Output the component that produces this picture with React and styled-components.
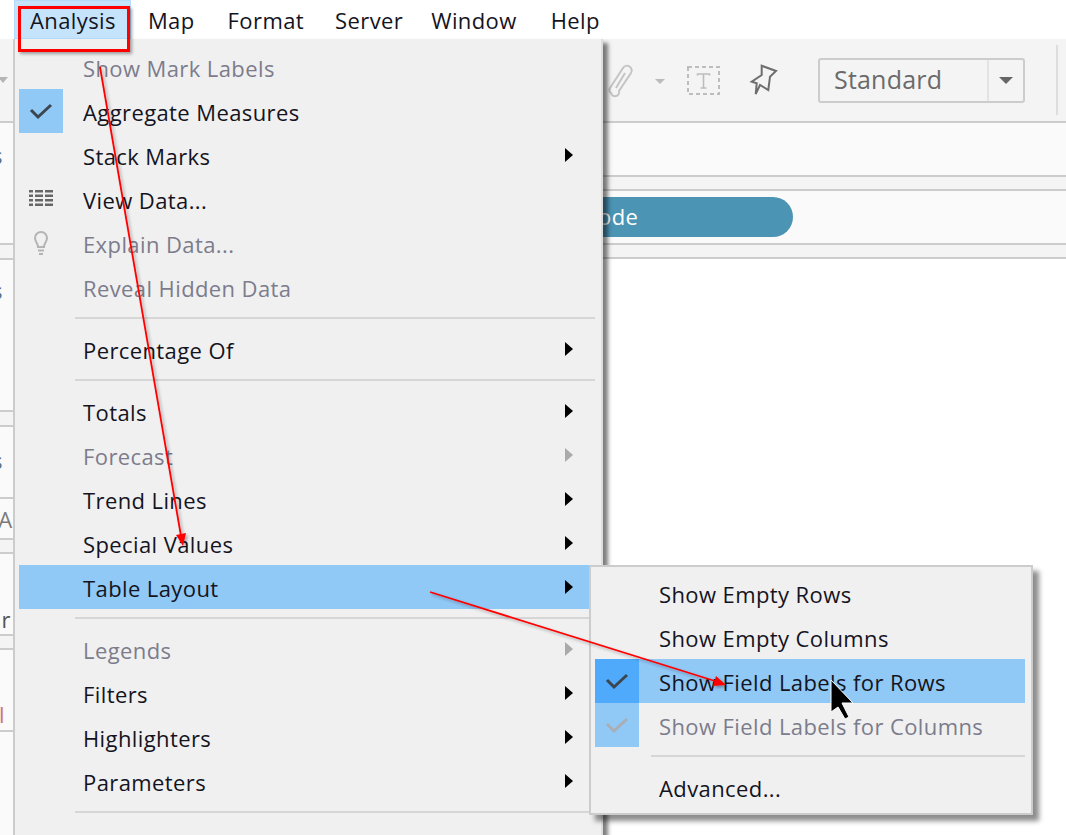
import React from "react";
import styled, { createGlobalStyle } from "styled-components";

const FONT = `"Open Sans", "Noto Sans", sans-serif`;

const GlobalStyle = createGlobalStyle`
  html, body {
    margin: 0;
    padding: 0;
    background: #fff;
    font-family: ${FONT};
  }
`;

const Page = styled.div`
  position: relative;
  width: 1066px;
  height: 835px;
  overflow: hidden;
  background: #fff;
  color: #14141e;
  font-size: 22px;
  letter-spacing: 0.4px;
`;

const MenuBar = styled.div`
  display: flex;
  align-items: center;
  height: 39px;
  padding-left: 14px;
`;

const MenuBarItem = styled.div`
  display: flex;
  align-items: center;
  height: 39px;
  padding: 0 15px 0 ${p => p.$left || 17}px;
  background: ${p => (p.$active ? "#c6e3fc" : "transparent")};
  box-shadow: ${p => (p.$active ? "inset 0 0 0 1px #b5dbfb" : "none")};
`;

const Body = styled.div`
  display: flex;
  height: 796px;
`;

const LeftPane = styled.div`
  width: 13px;
  flex: none;
  border-right: 2px solid #ccc;
  display: flex;
  flex-direction: column;
  overflow: hidden;
`;

const LeftRow = styled.div`
  height: ${p => p.$h}px;
  flex: ${p => (p.$grow ? 1 : "none")};
  background: ${p => (p.$shade ? "#f4f4f4" : "#fafafa")};
  border-bottom: ${p => (p.$grow ? "0" : "2px solid #ccc")};
  position: relative;
  overflow: hidden;
`;

const LeftText = styled.span`
  position: absolute;
  right: ${p => p.$right}px;
  top: ${p => p.$top}px;
  color: ${p => p.$color || "#5f6f86"};
  line-height: 28px;
  white-space: nowrap;
`;

const LeftCaret = styled.div`
  position: absolute;
  left: -2px;
  top: 38px;
  border: 5px solid transparent;
  border-top: 6px solid #b5b5b5;
  border-bottom: 0;
`;

const Main = styled.div`
  flex: 1;
  display: flex;
  flex-direction: column;
  min-width: 0;
`;

const Toolbar = styled.div`
  height: 82px;
  flex: none;
  display: flex;
  align-items: center;
  justify-content: flex-end;
  background: #f4f4f4;
  border-bottom: 2px solid #ccc;
`;

const ToolIcon = styled.svg`
  display: block;
  flex: none;
  margin-right: ${p => p.$gap}px;
  overflow: visible;
`;

const ToolCaret = styled.div`
  width: 0;
  height: 0;
  flex: none;
  margin: 2px ${p => p.$gap}px 0 0;
  border: 5px solid transparent;
  border-top: 5px solid #bbb;
  border-bottom: 0;
`;

const StyleSelect = styled.div`
  width: 207px;
  height: 45px;
  box-sizing: border-box;
  flex: none;
  display: flex;
  margin-right: 31px;
  border: 2px solid #ccc;
  border-radius: 3px;
  color: #6a6a6a;
  font-size: 25px;
  letter-spacing: 0.2px;
`;

const StyleValue = styled.div`
  flex: 1;
  display: flex;
  align-items: center;
  padding: 0 0 3px 14px;
  border-right: 2px solid #e3e3e3;
`;

const StyleArrow = styled.div`
  width: 34px;
  display: flex;
  align-items: center;
  justify-content: center;

  &::after {
    content: "";
    border: 7px solid transparent;
    border-top: 7px solid #666;
    border-bottom: 0;
  }
`;

const ToolDivider = styled.div`
  width: 2px;
  height: 70px;
  flex: none;
  margin-right: 8px;
  background: #ddd;
`;

const Shelf = styled.div`
  height: ${p => p.$h}px;
  flex: none;
  display: flex;
  align-items: center;
  background: ${p => (p.$shade ? "#f4f4f4" : "#fafafa")};
  border-bottom: 2px solid #ccc;
`;

const Pill = styled.div`
  width: 393px;
  height: 40px;
  box-sizing: border-box;
  margin-left: 385px;
  padding: 0 0 2px 198px;
  display: flex;
  align-items: center;
  background: #4b94b4;
  border-radius: 20px;
  color: #fff;
  font-size: 22px;
`;

const Canvas = styled.div`
  flex: 1;
  background: #fff;
`;

const Menu = styled.div`
  position: absolute;
  left: 15px;
  top: 39px;
  width: 588px;
  box-sizing: border-box;
  padding: 6px 6px 40px 4px;
  background: #f0f0f0;
  border-right: 2px solid #dedede;
  box-shadow: 5px 4px 4px rgba(0, 0, 0, 0.5);
`;

const SubMenu = styled.div`
  position: absolute;
  left: 589px;
  top: 565px;
  width: 444px;
  box-sizing: border-box;
  padding: 4px 6px 4px 4px;
  background: #f0f0f0;
  border: 2px solid #ccc;
  box-shadow: 6px 6px 5px rgba(0, 0, 0, 0.45);
`;

const Row = styled.div`
  display: flex;
  align-items: center;
  height: 44px;
  background: ${p => (p.$on ? "#90c8f6" : "transparent")};
  color: ${p => (p.$off ? "#7c7c8c" : "inherit")};
`;

const IconCell = styled.div`
  width: 44px;
  height: 44px;
  flex: none;
  display: flex;
  align-items: center;
  justify-content: center;
  background: ${p => p.$bg || "transparent"};
`;

const Label = styled.div`
  flex: 1;
  margin-left: 20px;
  position: relative;
  top: 1px;
  white-space: nowrap;
`;

const SubArrow = styled.div`
  margin-right: 22px;
  border: 7px solid transparent;
  border-left: 8px solid ${p => (p.$off ? "#aaa" : "#000")};
  border-right: 0;
`;

const Separator = styled.div`
  height: 2px;
  margin: 8px 0 8px 56px;
  background: #d6d6d6;
`;

const Overlay = styled.svg`
  position: absolute;
  left: 0;
  top: 0;
  pointer-events: none;
`;

const RedBox = styled.div`
  position: absolute;
  left: 18px;
  top: 6px;
  width: 112px;
  height: 46px;
  box-sizing: border-box;
  border: 3px solid #f00;
  box-shadow: 2px 2px 3px rgba(0, 0, 0, 0.35);
`;

const Check = ({ color = "#3c4650" }) => (
  <svg width="24" height="18" viewBox="0 0 24 18">
    <polyline points="2,8 9,15 22,3" fill="none" stroke={color} strokeWidth="3" />
  </svg>
);

const GridIcon = () => (
  <svg width="24" height="19" viewBox="0 0 24 19" fill="#666">
    {[0, 4.5, 9, 13.5].map(y => (
      <g key={y}>
        <rect x="0" y={y} width="4" height="2.5" />
        <rect x="6" y={y} width="8" height="2.5" />
        <rect x="16" y={y} width="8" height="2.5" />
      </g>
    ))}
  </svg>
);

const BulbIcon = () => (
  <svg width="16" height="24" viewBox="0 0 16 24" fill="none" stroke="#b4b4b4" strokeWidth="2">
    <path d="M5 16 C5 12 2 11 2 7 A6 6 0 0 1 14 7 C14 11 11 12 11 16 Z" />
    <path d="M5 19.5 H11 M6 23 H10" />
  </svg>
);

const mainRows = [
  { label: "Show Mark Labels", off: true },
  { label: "Aggregate Measures", icon: "check" },
  { label: "Stack Marks", sub: true },
  { label: "View Data...", icon: "grid" },
  { label: "Explain Data...", off: true, icon: "bulb" },
  { label: "Reveal Hidden Data", off: true },
  { sep: true },
  { label: "Percentage Of", sub: true },
  { sep: true },
  { label: "Totals", sub: true },
  { label: "Forecast", sub: true, off: true },
  { label: "Trend Lines", sub: true },
  { label: "Special Values", sub: true },
  { label: "Table Layout", sub: true, on: true },
  { sep: true },
  { label: "Legends", sub: true, off: true },
  { label: "Filters", sub: true },
  { label: "Highlighters", sub: true },
  { label: "Parameters", sub: true },
  { sep: true }
];

const subRows = [
  { label: "Show Empty Rows" },
  { label: "Show Empty Columns" },
  { label: "Show Field Labels for Rows", on: true, icon: "check" },
  { label: "Show Field Labels for Columns", off: true, icon: "check" },
  { sep: true },
  { label: "Advanced..." }
];

const cellColor = row => {
  if (row.icon !== "check") return null;
  if (row.on) return "#4faafb";
  return "#90c8f6";
};

const MenuRows = ({ rows }) =>
  rows.map((row, i) =>
    row.sep ? (
      <Separator key={i} />
    ) : (
      <Row key={i} $on={row.on} $off={row.off}>
        <IconCell $bg={cellColor(row)}>
          {row.icon === "check" && <Check color={row.off ? "#a8aeb4" : "#3c4650"} />}
          {row.icon === "grid" && <GridIcon />}
          {row.icon === "bulb" && <BulbIcon />}
        </IconCell>
        <Label>{row.label}</Label>
        {row.sub && <SubArrow $off={row.off} />}
      </Row>
    )
  );

const App = () => (
  <Page>
    <GlobalStyle />
    <MenuBar>
      <MenuBarItem $active $left={16}>Analysis</MenuBarItem>
      <MenuBarItem>Map</MenuBarItem>
      <MenuBarItem $left={18}>Format</MenuBarItem>
      <MenuBarItem $left={16}>Server</MenuBarItem>
      <MenuBarItem $left={13}>Window</MenuBarItem>
      <MenuBarItem $left={19}>Help</MenuBarItem>
    </MenuBar>

    <Body>
      <LeftPane>
        <LeftRow $h={82} $shade>
          <LeftCaret />
        </LeftRow>
        <LeftRow $h={120}>
          <LeftText $right={10} $top={18}>s</LeftText>
        </LeftRow>
        <LeftRow $h={13} $shade />
        <LeftRow $h={150}>
          <LeftText $right={10} $top={16}>s</LeftText>
        </LeftRow>
        <LeftRow $h={13} $shade />
        <LeftRow $h={70}>
          <LeftText $right={10} $top={19}>s</LeftText>
        </LeftRow>
        <LeftRow $h={39}>
          <LeftText $right={-9} $top={6} $color="#7a7a7a">Ar</LeftText>
        </LeftRow>
        <LeftRow $h={12} $shade />
        <LeftRow $h={80}>
          <LeftText $right={2} $top={51} $color="#555">ur</LeftText>
        </LeftRow>
        <LeftRow $h={12} $shade />
        <LeftRow $h={80}>
          <LeftText $right={8} $top={50} $color="#c77">l</LeftText>
        </LeftRow>
        <LeftRow $grow />
      </LeftPane>

      <Main>
        <Toolbar>
          <ToolIcon $gap={22} width="26" height="32" viewBox="0 0 26 32" fill="none" stroke="#c4c4c4" strokeWidth="2">
            <path d="M3 24 L16 4 A4.5 4.5 0 0 1 24 9 L12 27 A4 4 0 0 1 4 29 A4 4 0 0 1 3 24 M9 24 L18 9" />
          </ToolIcon>
          <ToolCaret $gap={22} />
          <ToolIcon $gap={30} width="33" height="29" viewBox="0 0 33 29" fill="none" stroke="#bdbdbd">
            <rect x="1" y="1" width="31" height="27" strokeWidth="2" strokeDasharray="4 3" />
            <path d="M10.5 9.5 V8 H22.5 V9.5 M16.5 8 V22 M13.5 22 H19.5" strokeWidth="1.6" />
          </ToolIcon>
          <ToolIcon $gap={40} width="28" height="32" viewBox="0 0 28 32" fill="none" stroke="#6e6e6e" strokeWidth="2">
            <path d="M11.7 1.7 L26 7 L20 12.7 L18.3 26 L10 21 L5.7 30 L6.7 19.3 L1.7 17.7 L11.7 11 Z" />
          </ToolIcon>
          <StyleSelect>
            <StyleValue>Standard</StyleValue>
            <StyleArrow />
          </StyleSelect>
          <ToolDivider />
        </Toolbar>
        <Shelf $h={52} />
        <Shelf $h={12} $shade />
        <Shelf $h={52}>
          <Pill>ode</Pill>
        </Shelf>
        <Shelf $h={12} $shade />
        <Canvas />
      </Main>
    </Body>

    <Menu>
      <MenuRows rows={mainRows} />
    </Menu>
    <SubMenu>
      <MenuRows rows={subRows} />
    </SubMenu>

    <RedBox />
    <Overlay width="1066" height="835" viewBox="0 0 1066 835">
      <defs>
        <filter id="soft" x="-20%" y="-20%" width="140%" height="140%">
          <feDropShadow dx="2" dy="2" stdDeviation="1.5" floodColor="#000" floodOpacity="0.3" />
        </filter>
      </defs>
      <g filter="url(#soft)">
        <line x1="100" y1="67" x2="181" y2="536" stroke="#f00" strokeWidth="1.8" />
        <polygon points="183,546 176,535 186,533" fill="#f00" />
        <line x1="430" y1="592" x2="715" y2="681" stroke="#f00" strokeWidth="1.8" />
        <polygon points="726,685 713,686 716,676" fill="#f00" />
      </g>
      <polygon
        points="831,680 853,703 842,703 849,717 845,719 838,707 831,712"
        fill="#000"
        stroke="#fff"
        strokeWidth="1"
      />
    </Overlay>
  </Page>
);

export default App;
